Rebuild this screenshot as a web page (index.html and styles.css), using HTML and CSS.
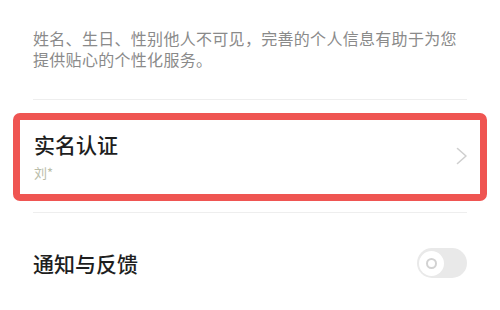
FILE: index.html
```html
<!DOCTYPE html>
<html lang="zh-CN">
<head>
<meta charset="utf-8">
<title>个人信息</title>
<link rel="stylesheet" href="styles.css">
</head>
<body>
<div class="page">
  <p class="desc">姓名、生日、性别他人不可见，完善的个人信息有助于为您提供贴心的个性化服务。</p>
  <div class="divider"></div>
  <div class="highlight">
    <div class="row-verify">
      <div class="row-text">
        <div class="row-title">实名认证</div>
        <div class="row-sub">刘*</div>
      </div>
      <svg class="chevron" width="12" height="18" viewBox="0 0 12 18">
        <path d="M1.5 1.5 L10 9 L1.5 16.5" fill="none" stroke="#cfcfcf" stroke-width="1.6" stroke-linecap="round" stroke-linejoin="round"/>
      </svg>
    </div>
  </div>
  <div class="divider divider-low"></div>
  <div class="row-notify">
    <div class="row-title">通知与反馈</div>
    <div class="toggle"><span class="knob"><span class="knob-dot"></span></span></div>
  </div>
</div>
</body>
</html>
```

FILE: styles.css
```css
html, body {
  margin: 0;
  padding: 0;
  background: #ffffff;
}
body {
  font-family: "Noto Sans CJK SC", "Noto Sans", sans-serif;
  width: 500px;
  height: 310px;
  overflow: hidden;
}
.page {
  display: flex;
  flex-direction: column;
}
.desc {
  margin: 0;
  padding: 28px 40px 0 33px;
  font-size: 16px;
  line-height: 21px;
  color: #8a8a8a;
  letter-spacing: 0.3px;
}
.divider {
  height: 1px;
  background: #eeeeee;
  margin: 29px 33px 0 33px;
}
.divider-low {
  margin-top: 11px;
}
.highlight {
  margin: 13px 13px 0 13px;
  border: 7px solid #ef5552;
  border-radius: 7px;
}
.row-verify {
  display: flex;
  align-items: center;
  justify-content: space-between;
  padding: 9px 12px 12px 14px;
}
.row-text {
  display: flex;
  flex-direction: column;
}
.row-title {
  font-size: 21px;
  line-height: 30px;
  color: #1e1e1e;
  font-weight: 500;
}
.row-sub {
  margin-top: 5px;
  font-size: 13px;
  line-height: 18px;
  color: #b9bda9;
}
.chevron {
  display: block;
}
.row-notify {
  display: flex;
  align-items: center;
  justify-content: space-between;
  height: 100px;
  padding: 0 33px 0 33px;
}
.toggle {
  width: 50px;
  height: 30px;
  border-radius: 15px;
  background: #e9e9e9;
  display: flex;
  align-items: center;
  padding-left: 2px;
  box-sizing: border-box;
}
.knob {
  width: 25px;
  height: 25px;
  border-radius: 50%;
  background: #ffffff;
  display: flex;
  align-items: center;
  justify-content: center;
}
.knob-dot {
  width: 7px;
  height: 7px;
  border-radius: 50%;
  border: 2px solid #d2d2d2;
}
```
